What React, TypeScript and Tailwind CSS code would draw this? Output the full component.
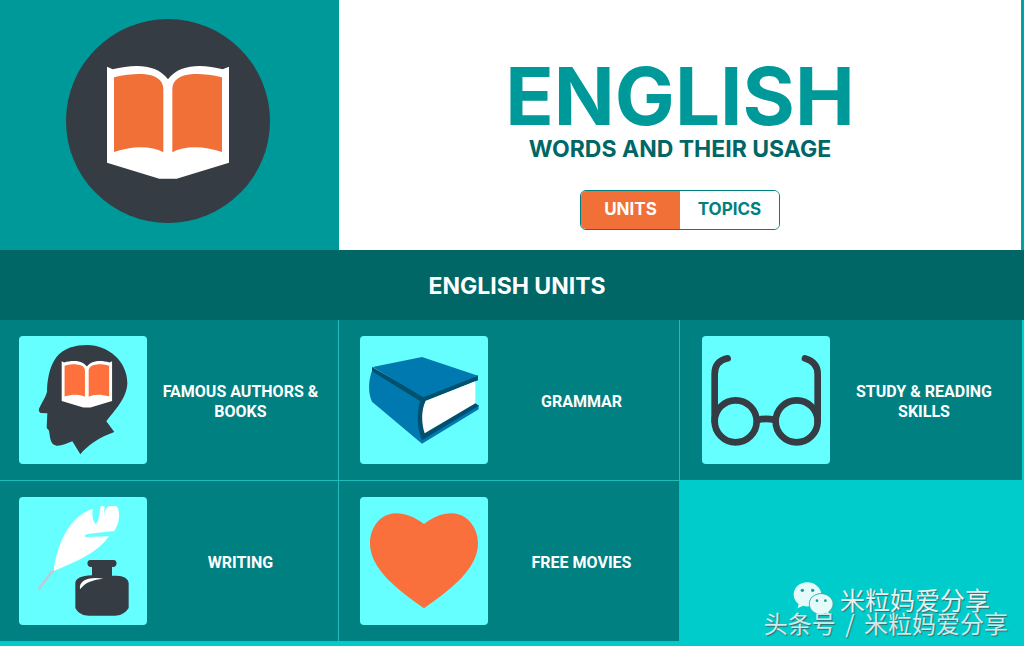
import { useState } from "react";
import type { ReactNode } from "react";
import clsx from "clsx";

type Unit = {
  slug: string;
  title: string;
  icon: ReactNode;
};

function OpenBook({ pageColor }: { pageColor: string }) {
  return (
    <>
      <path
        fill="#fff"
        d="M321 200L338 208C400 192 470 190 504 238C538 190 610 192 668 208L687 200V488L530 536H478L321 488Z"
      />
      <path
        fill={pageColor}
        d="M342 232C375 223 405 221 428 222C465 224 490 238 490 268V457C455 438 400 436 342 456Z"
      />
      <path
        fill={pageColor}
        d="M666 232C633 223 603 221 580 222C543 224 517 238 517 268V457C552 438 608 436 666 456Z"
      />
    </>
  );
}

function HeroIcon() {
  return (
    <svg viewBox="198 57 612 612" className="size-[204px]" aria-hidden="true">
      <circle cx="504" cy="363" r="306" fill="#353c44" />
      <OpenBook pageColor="#f07038" />
    </svg>
  );
}

function HeadIcon() {
  return (
    <svg viewBox="57 48 384 384" className="size-32" aria-hidden="true">
      <path
        fill="#353c44"
        d="M241 403L217 364C200 370 185 378 170 377C158 376 152 365 150 352L147 332C145 328 140 327 140 322L142 280L122 279C116 276 115 270 118 264C125 248 137 232 141 216C141 185 147 140 170 110C192 84 225 75 262 75C325 75 382 125 382 188C382 235 340 275 319 304L343 336C320 344 299 354 281 367C263 379 252 390 241 403Z"
      />
      <g transform="translate(52.5 41.5) scale(0.413)">
        <OpenBook pageColor="#ff713c" />
      </g>
    </svg>
  );
}

function GrammarIcon() {
  return (
    <svg viewBox="60 48 384 384" className="size-32" aria-hidden="true">
      <path fill="#0079b0" d="M98 148C84 180 84 220 96 245L246 371L416 268V256L300 300L250 236Z" />
      <path fill="#00516f" d="M96 141L250 228L414 166V181L256 243L254 338L405 249L417 257L246 361C230 322 230 280 240 243L96 154Z" />
      <path fill="#0079b0" d="M98 141L246 111L414 167L250 232Z" />
      <path fill="#fff" d="M257 243L406 184V250L254 340C244 310 243 270 257 243Z" />
    </svg>
  );
}

function GlassesIcon() {
  return (
    <svg
      viewBox="66 48 384 384"
      className="size-32"
      fill="none"
      stroke="#353c44"
      strokeWidth="20"
      strokeLinecap="round"
      aria-hidden="true"
    >
      <circle cx="167" cy="304" r="63" />
      <circle cx="350" cy="304" r="63" />
      <path d="M104 304V162C104 135 119 120 143 115" />
      <path d="M413 304V162C413 135 399 122 375 115" />
      <path d="M236 299Q259 294 282 299" />
    </svg>
  );
}

function WritingIcon() {
  return (
    <svg viewBox="57 51 384 384" className="size-32" aria-hidden="true">
      <path d="M167 264C145 287 132 305 117 327" stroke="#b5cfda" strokeWidth="8" strokeLinecap="round" fill="none" />
      <path
        fill="#fff"
        d="M161 273C170 200 205 108 278 87C276 105 277 122 287 132C298 125 297 100 302 79C306 77 310 78 314 80L312 106C314 95 318 85 325 79C334 77 343 78 350 79C363 97 358 130 343 153L262 162C252 165 252 171 260 171L327 169C290 220 235 242 161 273Z"
      />
      <path
        fill="#353c44"
        d="M271 240H341C353 240 353 261 339 261H336V287H350C370 287 386 296 386 310V384C376 400 360 407 345 407H267C250 407 234 400 226 384V310C226 296 243 287 276 286V261H273C259 261 259 240 271 240Z"
      />
      <path fill="#fff" d="M240 328C236 303 263 289 310 296C280 299 256 306 240 328Z" />
    </svg>
  );
}

function HeartIcon() {
  return (
    <svg viewBox="60 51 384 384" className="size-32" aria-hidden="true">
      <path
        fill="#fa703c"
        d="M252 132C225 112 195 100 167 100C122 100 90 142 90 190C90 270 180 334 252 385C324 334 414 270 414 190C414 142 380 100 336 100C305 100 279 112 252 132Z"
      />
    </svg>
  );
}

function WeChatIcon() {
  return (
    <svg viewBox="160 62 123 108" className="-my-2 h-9 w-[41px]" aria-hidden="true">
      <path
        fill="#e4fbfa"
        d="M203 66C180 66 162 82 162 103C162 115 168 124 177 131L174 144L190 136C196 138 202 139 209 138C204 116 222 99 245 99C241 80 224 66 203 66Z"
      />
      <path
        fill="#e4fbfa"
        stroke="#3a9f9f"
        strokeWidth="2"
        d="M244 100C224 100 209 114 209 130C209 148 224 162 244 162C249 162 254 161 258 159L270 166L267 154C275 148 280 140 280 130C280 114 264 100 244 100Z"
      />
      <circle cx="188" cy="90" r="5" fill="#169e9e" />
      <circle cx="219" cy="90" r="5" fill="#169e9e" />
      <circle cx="232" cy="121" r="4" fill="#169e9e" />
      <circle cx="257" cy="121" r="4" fill="#169e9e" />
    </svg>
  );
}

const units: Unit[] = [
  { slug: "famous-authors", title: "Famous Authors & Books", icon: <HeadIcon /> },
  { slug: "grammar", title: "Grammar", icon: <GrammarIcon /> },
  { slug: "study-skills", title: "Study & Reading Skills", icon: <GlassesIcon /> },
  { slug: "writing", title: "Writing", icon: <WritingIcon /> },
  { slug: "free-movies", title: "Free Movies", icon: <HeartIcon /> },
];

const columnPadding = ["pl-[19px]", "pl-[21px]", "pl-[22px]"];

function UnitTile({ unit, index }: { unit: Unit; index: number }) {
  return (
    <a
      href={`#${unit.slug}`}
      className={clsx(
        "flex items-center bg-[#008080] py-4 pr-1",
        columnPadding[index % 3],
        index % 3 !== 2 && "border-r border-b border-[#1fbcbc]"
      )}
    >
      <span className="shrink-0 overflow-hidden rounded bg-[#66ffff]">{unit.icon}</span>
      <span className="flex-1 px-3 pt-1 text-center font-['Roboto',sans-serif] text-base leading-5 font-bold text-white uppercase">
        {unit.title}
      </span>
    </a>
  );
}

export default function App() {
  const [tab, setTab] = useState<"units" | "topics">("units");

  return (
    <div className="relative min-h-screen bg-[#00cccc] pr-0.5 font-['Inter',sans-serif]">
      <header className="-mr-0.5 grid grid-cols-[339fr_682fr] border-r-[3px] border-[#00a3a3] bg-white">
        <div className="flex items-center justify-center bg-[#009999] pt-[19px] pr-[3px] pb-[27px]">
          <HeroIcon />
        </div>
        <div className="flex flex-col items-center pt-[57px] pb-5">
          <h1 className="text-[80px] leading-[78px] font-bold text-[#009999] uppercase">English</h1>
          <p className="text-[23px] leading-7 font-bold text-[#006666] uppercase">Words and their usage</p>
          <div className="mt-[27px] flex overflow-hidden rounded-md border border-[#008080] text-[17px] font-bold uppercase">
            <button
              type="button"
              onClick={() => setTab("units")}
              className={clsx(
                "h-[38px] w-[99px] uppercase",
                tab === "units" ? "bg-[#f07038] text-white" : "bg-white text-[#008080]"
              )}
            >
              Units
            </button>
            <button
              type="button"
              onClick={() => setTab("topics")}
              className={clsx(
                "h-[38px] w-[99px] uppercase",
                tab === "topics" ? "bg-[#f07038] text-white" : "bg-white text-[#008080]"
              )}
            >
              Topics
            </button>
          </div>
        </div>
      </header>

      <main>
        <h2 className="-mr-0.5 bg-[#006666] pt-[21px] pb-[19px] pl-2.5 text-center text-[23px] leading-[30px] font-bold text-white uppercase">
          English {tab}
        </h2>
        <div className="grid grid-cols-[339fr_341fr_342fr] items-start">
          {units.map((unit, index) => (
            <UnitTile key={unit.slug} unit={unit} index={index} />
          ))}
        </div>
      </main>

      {/* Share credit floats over the empty corner of the grid */}
      <div className="absolute right-4 bottom-[11px] flex flex-col items-end font-['Noto_Sans_CJK_SC',sans-serif] text-white/90 [text-shadow:1px_1px_1px_#336b6b]">
        <div className="mr-[18px] flex items-center gap-1.5 text-[25px] leading-6">
          <WeChatIcon />
          <span>米粒妈爱分享</span>
        </div>
        <p className="text-2xl leading-6 text-white/80">
          头条号 <span className="mx-1">/</span> 米粒妈爱分享
        </p>
      </div>
    </div>
  );
}
